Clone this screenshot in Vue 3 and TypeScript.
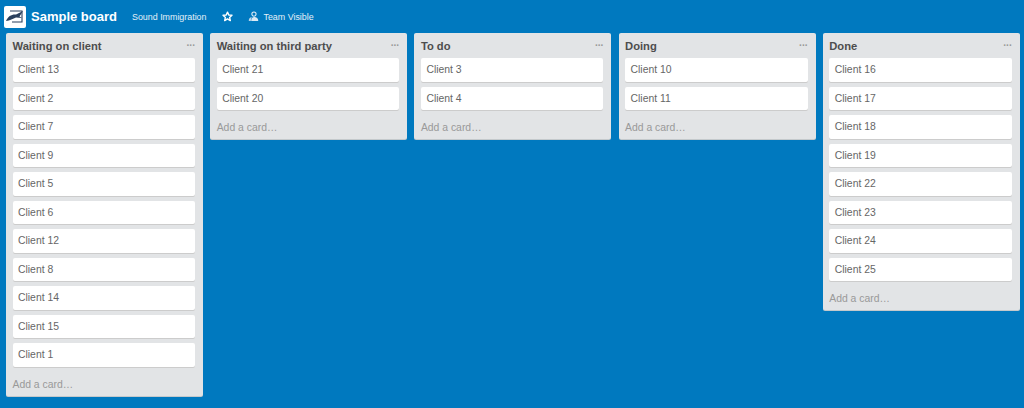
<script setup lang="ts">
interface List { title: string; cards: number[] }
const lists: List[] = [
  { title: 'Waiting on client', cards: [13, 2, 7, 9, 5, 6, 12, 8, 14, 15, 1] },
  { title: 'Waiting on third party', cards: [21, 20] },
  { title: 'To do', cards: [3, 4] },
  { title: 'Doing', cards: [10, 11] },
  { title: 'Done', cards: [16, 17, 18, 19, 22, 23, 24, 25] },
]
</script>

<template>
  <div class="board">
    <header class="bar">
      <div class="logo">
        <svg width="20" height="17" viewBox="0 0 20 17">
          <path d="M1 13 C3 8 7 6 11 6.5 L18 3 L14.5 8.5 L17 10 L11 9.5 C8 10.5 5 12.5 1 13 Z" fill="#2a3f5c" />
          <path d="M5 3 H17 V14 H7" fill="none" stroke="#2a3f5c" stroke-width="1.1" />
        </svg>
      </div>
      <span class="name">Sample board</span>
      <span class="org">Sound Immigration</span>
      <svg class="star" width="11" height="11" viewBox="0 0 12 12">
        <path d="M6 1.2 7.4 4.4 10.9 4.7 8.3 7 9.1 10.5 6 8.6 2.9 10.5 3.7 7 1.1 4.7 4.6 4.4Z" fill="none" stroke="#fff" stroke-width="1.5" stroke-linejoin="round" />
      </svg>
      <svg class="team" width="11" height="11" viewBox="0 0 12 12">
        <circle cx="6.5" cy="3.4" r="2.3" fill="none" stroke="#dbe9f4" stroke-width="1.2" />
        <path d="M3.5 10.8 C3.5 7.8 4.8 6.6 6.8 6.6 C9.5 6.6 11.2 8 11.2 10.8 Z" fill="#dbe9f4" />
        <path d="M.8 10.8 C.8 8.4 2 7 4 6.6 L3 10.8 Z" fill="#b9d5ea" />
      </svg>
      <span class="vis">Team Visible</span>
    </header>
    <main class="lists">
      <section v-for="list in lists" :key="list.title" class="list">
        <div class="head">
          <h2>{{ list.title }}</h2>
          <span class="more">···</span>
        </div>
        <div class="cards">
          <div v-for="c in list.cards" :key="c" class="card">Client {{ c }}</div>
        </div>
        <div class="add">Add a card…</div>
      </section>
    </main>
  </div>
</template>

<style>
html, body { margin: 0; background: #0079bf; }
</style>

<style scoped>
.board {
  width: 1024px;
  height: 408px;
  overflow: hidden;
  background: #0079bf;
  font-family: "Liberation Sans", Arial, sans-serif;
}
.bar {
  height: 33px;
  display: flex;
  align-items: center;
  padding-left: 4px;
  box-sizing: border-box;
  color: #fff;
}
.logo {
  width: 22px;
  height: 22px;
  background: #fff;
  border-radius: 2px;
  display: flex;
  align-items: center;
  justify-content: center;
  margin-right: 5px;
}
.name {
  font-size: 13px;
  font-weight: 700;
  width: 101px;
}
.org, .vis {
  font-size: 8.9px;
  color: #e4f0f8;
}
.org { width: 90px; }
.star { margin-right: 15px; }
.team { margin-right: 4.5px; }
.lists {
  display: flex;
  align-items: flex-start;
  gap: 7.2px;
  padding-left: 6px;
}
.list {
  width: 197px;
  flex: none;
  background: #e2e4e6;
  border-radius: 2px;
  box-sizing: border-box;
  padding: 0 8px 0 6.5px;
  box-shadow: 0 1px 0 #c4c9cc;
}
.head {
  height: 25px;
  display: flex;
  align-items: center;
  justify-content: space-between;
  margin-right: -1px;
}
h2 {
  margin: 0;
  font-size: 11.2px;
  font-weight: 700;
  color: #4d4d4d;
}
.more {
  color: #999;
  font-size: 10px;
  font-weight: 700;
  letter-spacing: -0.5px;
  padding-right: 1px;
}
.cards {
  display: flex;
  flex-direction: column;
  gap: 5px;
}
.card {
  height: 23.5px;
  line-height: 23.5px;
  background: #fff;
  border-radius: 2px;
  box-shadow: 0 1px 0 #ccc;
  padding-left: 5.5px;
  font-size: 10.4px;
  color: #666;
}
.add {
  height: 29px;
  line-height: 35px;
  font-size: 10.4px;
  color: #999;
}
</style>
